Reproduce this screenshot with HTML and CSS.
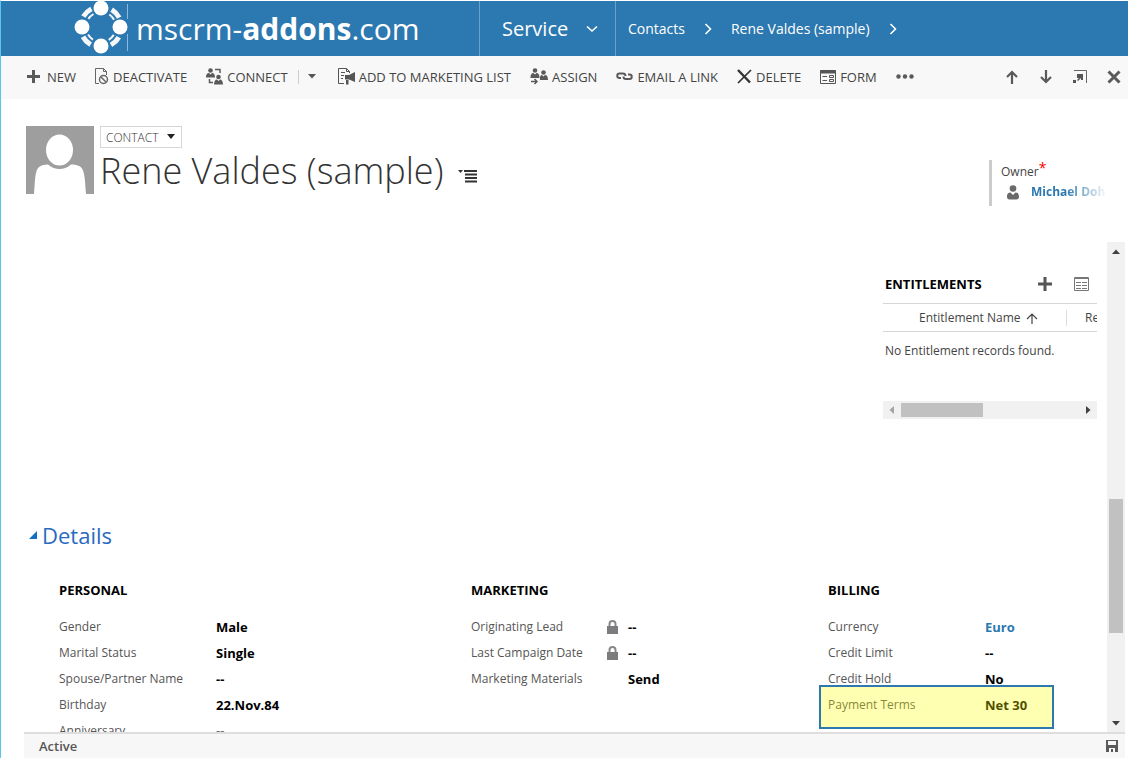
FILE: index.html
```html
<!DOCTYPE html>
<html lang="en">
<head>
    <meta charset="UTF-8">
    <meta name="viewport" content="width=device-width, initial-scale=1.0">
    <title>Contact: Rene Valdes (sample)</title>
    <link rel="stylesheet" href="styles.css">
</head>
<body>
    <header class="topbar">
        <a href="#" class="brand">
            <svg class="brand-logo" width="56" height="55" viewBox="0 0 56 55">
                <g fill="none" stroke="#f4f6f8">
                    <circle cx="27" cy="26" r="20.500" stroke-width="5" stroke-dasharray="11 21.201" stroke-dashoffset="-10.600"/>
                    <circle cx="27" cy="26" r="15" stroke-width="2" stroke-dasharray="7 16.562" stroke-dashoffset="-8.300"/>
                </g>
                <g fill="#fff">
                    <circle cx="27" cy="7" r="7.500"/>
                    <circle cx="8" cy="26" r="7.500"/>
                    <circle cx="46" cy="26" r="7.500"/>
                    <circle cx="27" cy="45" r="7.500"/>
                </g>
                <path d="M53.500 3v15M53.500 33v17" stroke="#8db9da"/>
            </svg>
            <span class="brand-name">mscrm-<b>addons</b>.com</span>
        </a>
        <button class="area">Service
            <svg width="12" height="8" viewBox="0 0 12 8"><path d="M1 1.500l5 4.500 5-4.500" fill="none" stroke="#fff" stroke-width="1.600"/></svg>
        </button>
        <nav class="crumbs">
            <a href="#">Contacts</a>
            <svg width="8" height="12" viewBox="0 0 8 12"><path d="M1.500 1l5 5-5 5" fill="none" stroke="#fff" stroke-width="1.600"/></svg>
            <a href="#">Rene Valdes (sample)</a>
            <svg width="8" height="12" viewBox="0 0 8 12"><path d="M1.500 1l5 5-5 5" fill="none" stroke="#fff" stroke-width="1.600"/></svg>
        </nav>
    </header>

    <div class="commands">
        <button class="cmd cmd-new">
            <svg width="15" height="15" viewBox="0 0 15 15"><path d="M7.500 1v13M1 7.500h13" stroke="#5a5a5a" stroke-width="3"/></svg>
            NEW
        </button>
        <button class="cmd">
            <svg width="14" height="17" viewBox="0 0 14 17" fill="none" stroke="#666">
                <path d="M4 15.500H.5V.5h8l3 3V7M8.500.5v3h3"/>
                <circle cx="8.500" cy="11.500" r="4" stroke-width="1.500"/>
                <path d="M6 9l5 5" stroke-width="1.500"/>
            </svg>
            DEACTIVATE
        </button>
        <button class="cmd">
            <svg width="17" height="17" viewBox="0 0 17 17" fill="#5a5a5a">
                <circle cx="4.500" cy="2.500" r="2.300"/>
                <path d="M0 9.500C0 6 1.500 5 3 5l1.500 1.500L6 5c1.500 0 3 1 3 4.500z"/>
                <circle cx="12.500" cy="9" r="2.300"/>
                <path d="M8 16.500c0-3.500 1.500-5 3-5l1.500 1.500 1.500-1.500c1.500 0 3 1.500 3 5z"/>
                <path d="M9 1.500h5V5M3.500 11v3.500H7" fill="none" stroke="#5a5a5a" stroke-width="1.500"/>
            </svg>
            CONNECT
        </button>
        <button class="cmd-split" aria-label="More connect options">
            <svg width="8" height="5" viewBox="0 0 8 5"><path d="M0 0h8L4 4.500z" fill="#555"/></svg>
        </button>
        <button class="cmd">
            <svg width="17" height="17" viewBox="0 0 17 17">
                <path d="M6 15.500H.5V.5h8l3 3V5M8.500.5v3h3M3 4.500h4M3 7.500h3M3 10.500h2" fill="none" stroke="#555"/>
                <path d="M17 4v10l-6-2.500H7V7h4zM8 12h2.500v4.500H8z" fill="#555"/>
            </svg>
            ADD TO MARKETING LIST
        </button>
        <button class="cmd">
            <svg width="18" height="17" viewBox="0 0 18 17" fill="#5a5a5a">
                <circle cx="5" cy="2.500" r="2.300"/>
                <path d="M.5 10c0-4 1.500-5 3-5L5 6.500 6.500 5c1.500 0 3 1 3 5z"/>
                <circle cx="13.500" cy="4.500" r="2.300"/>
                <path d="M10 12c-.5-3.500.5-5 2-5l1.500 1.500L15 7c1.500 0 3 1 3 5z"/>
                <path d="M1 13.500h5.500M4.500 11l2.500 2.500L4.500 16" fill="none" stroke="#5a5a5a" stroke-width="1.500"/>
            </svg>
            ASSIGN
        </button>
        <button class="cmd">
            <svg width="17" height="9" viewBox="0 0 17 9" fill="none" stroke="#5a5a5a" stroke-width="2">
                <path d="M5 6H3.500a2.200 2.200 0 010-4.500H7c1.500 0 2.500 1 2.500 2.500"/>
                <path d="M12 2.500h1.500a2.200 2.200 0 010 4.500H10C8.500 7 7.500 6 7.500 4.500"/>
            </svg>
            EMAIL A LINK
        </button>
        <button class="cmd">
            <svg width="15" height="15" viewBox="0 0 15 15" fill="none" stroke="#333"><path d="M1 1l12 12.500" stroke-width="2.500"/><path d="M14 1L1 14" stroke-width="1.700"/></svg>
            DELETE
        </button>
        <button class="cmd">
            <svg width="16" height="14" viewBox="0 0 16 14" fill="none" stroke="#555">
                <path d="M.5.5h15v13H.5z"/><path d="M0 2h16" stroke-width="3"/>
                <path d="M2.500 6.500H7M2.500 10.500H7M9.500 5.500h4v2h-4zM9.500 9.500h4v2h-4z"/>
            </svg>
            FORM
        </button>
        <button class="cmd" aria-label="More commands">
            <svg width="18" height="5" viewBox="0 0 18 5" fill="#5a5a5a"><circle cx="2.500" cy="2.500" r="2.200"/><circle cx="9" cy="2.500" r="2.200"/><circle cx="15.500" cy="2.500" r="2.200"/></svg>
        </button>
        <div class="record-nav">
            <button aria-label="Previous record"><svg width="14" height="14" viewBox="0 0 14 14" fill="none" stroke="#5a5a5a" stroke-width="2.200"><path d="M7 14V2M2 7l5-5 5 5"/></svg></button>
            <button aria-label="Next record"><svg width="14" height="14" viewBox="0 0 14 14" fill="none" stroke="#5a5a5a" stroke-width="2.200"><path d="M7 0v12M2 7l5 5 5-5"/></svg></button>
            <button aria-label="Open in new window"><svg width="14" height="14" viewBox="0 0 14 14"><path d="M1 .5h12.500V13" fill="none" stroke="#666"/><path d="M4 4h6v6H8V8l-3 3-1-1 2-2H4zM0 10h3v3H0z" fill="#555"/></svg></button>
            <button aria-label="Close"><svg width="14" height="14" viewBox="0 0 14 14"><path d="M1.500 1.500l11 11M12.500 1.500l-11 11" stroke="#5a5a5a" stroke-width="3"/></svg></button>
        </div>
    </div>

    <main class="record">
        <div class="record-head">
            <svg class="avatar" width="68" height="68" viewBox="0 0 68 68">
                <path d="M0 0h68v68H0z" fill="#9e9e9e"/>
                <ellipse cx="33.500" cy="24" rx="13.500" ry="15.500" fill="#fff"/>
                <path d="M8 68c1-13 1-22 4-26 2-2.500 6-3.500 10-3.500 7 6 16 6 23 0 5 0 9 1 11 4 3 5 3 13 4 25.500z" fill="#fff"/>
            </svg>
            <div class="record-title">
                <div class="entity">
                    <select class="entity-select" aria-label="Form"><option>CONTACT</option></select>
                </div>
                <div class="name-row">
                    <h1>Rene Valdes (sample)</h1>
                    <button class="plain" aria-label="Form sections">
                        <svg width="20" height="14" viewBox="0 0 20 14"><path d="M0 1h5L2.500 4z" fill="#333"/><path d="M6 2h13M7 5.500h12M7 9h12M7 12.500h12" stroke="#333" stroke-width="2"/></svg>
                    </button>
                </div>
            </div>
            <div class="owner">
                <div class="owner-label">Owner<span class="required">*</span></div>
                <div class="owner-value">
                    <svg width="12" height="15" viewBox="0 0 12 15" fill="#6a6a6a"><circle cx="6" cy="3.500" r="3.300"/><path d="M0 12c0-3.500 1.500-4.500 3.500-4.500L6 10l2.500-2.500c2 0 3.500 1 3.500 4.500 0 1.500-1 2.500-2.500 2.500h-7C1 14.500 0 13.500 0 12z"/></svg>
                    <a href="#">Michael Doh</a>
                </div>
            </div>
        </div>

        <div class="scroll-area">
            <div class="form-body">
                <section class="entitlements">
                    <div class="grid-head">
                        <h3>ENTITLEMENTS</h3>
                        <button class="plain" aria-label="Add entitlement"><svg width="14" height="14" viewBox="0 0 14 14"><path d="M7 0v14M0 7h14" stroke="#555" stroke-width="3"/></svg></button>
                        <button class="plain" aria-label="Open view"><svg width="15" height="14" viewBox="0 0 15 14" fill="none" stroke="#777"><path d="M.5.5h14v13H.5zM0 1.500h15M2 5.500h5M8 5.500h5M2 8.500h5M8 8.500h5M2 11.500h5M8 11.500h5"/></svg></button>
                    </div>
                    <div class="grid-view">
                        <table>
                            <thead>
                                <tr>
                                    <th class="col-name">Entitlement Name <svg width="12" height="11" viewBox="0 0 12 11"><path d="M6 11V1M1 6l5-5 5 5" fill="none" stroke="#444" stroke-width="1.200"/></svg></th>
                                    <th class="col-rest">Re</th>
                                </tr>
                            </thead>
                            <tbody>
                                <tr><td colspan="2">No Entitlement records found.</td></tr>
                            </tbody>
                        </table>
                    </div>
                    <div class="hscroll">
                        <svg width="18" height="18" viewBox="0 0 18 18"><path d="M11 5v8L6.500 9z" fill="#a3a3a3"/></svg>
                        <div class="hscroll-track"><div class="hscroll-thumb"></div></div>
                        <svg width="18" height="18" viewBox="0 0 18 18"><path d="M7 5v8l4.500-4z" fill="#404040"/></svg>
                    </div>
                </section>

                <h2><svg width="8" height="8" viewBox="0 0 8 8"><path d="M8 0v8H0z" fill="#1070c8"/></svg>Details</h2>

                <div class="columns">
                    <section>
                        <h3>PERSONAL</h3>
                        <dl>
                            <div class="field"><dt>Gender</dt><dd>Male</dd></div>
                            <div class="field"><dt>Marital Status</dt><dd>Single</dd></div>
                            <div class="field"><dt>Spouse/Partner Name</dt><dd>--</dd></div>
                            <div class="field"><dt>Birthday</dt><dd>22.Nov.84</dd></div>
                            <div class="field"><dt>Anniversary</dt><dd>--</dd></div>
                        </dl>
                    </section>
                    <section>
                        <h3>MARKETING</h3>
                        <dl>
                            <div class="field"><dt>Originating Lead <svg class="lock" width="11" height="14" viewBox="0 0 11 14"><path d="M2.500 7V4a3 3 0 016 0v3" fill="none" stroke="#888" stroke-width="2"/><path d="M0 6h11v8H0z" fill="#7c7c7f"/></svg></dt><dd>--</dd></div>
                            <div class="field"><dt>Last Campaign Date <svg class="lock" width="11" height="14" viewBox="0 0 11 14"><path d="M2.500 7V4a3 3 0 016 0v3" fill="none" stroke="#888" stroke-width="2"/><path d="M0 6h11v8H0z" fill="#7c7c7f"/></svg></dt><dd>--</dd></div>
                            <div class="field"><dt>Marketing Materials</dt><dd>Send</dd></div>
                        </dl>
                    </section>
                    <section>
                        <h3>BILLING</h3>
                        <dl>
                            <div class="field"><dt>Currency</dt><dd><a href="#">Euro</a></dd></div>
                            <div class="field"><dt>Credit Limit</dt><dd>--</dd></div>
                            <div class="field"><dt>Credit Hold</dt><dd>No</dd></div>
                            <div class="field marked"><dt>Payment Terms</dt><dd>Net 30</dd></div>
                        </dl>
                    </section>
                </div>
            </div>
            <div class="vscroll">
                <svg width="18" height="18" viewBox="0 0 18 18"><path d="M5 12h8L9 7.500z" fill="#404040"/></svg>
                <div class="vscroll-track"><div class="vscroll-thumb"></div></div>
                <svg width="18" height="18" viewBox="0 0 18 18"><path d="M5 7h8l-4 4.500z" fill="#404040"/></svg>
            </div>
        </div>
    </main>

    <footer class="statusbar">
        <span>Active</span>
        <button class="plain" aria-label="Save"><svg width="12" height="12" viewBox="0 0 12 12"><path d="M0 0h12v12H0z" fill="#5a5a5a"/><path d="M2 1h8v4H2zM3 8h6v4H7V9H5v3H3z" fill="#f7f7f7"/></svg></button>
    </footer>
</body>
</html>
```
FILE: styles.css
```css
*{
    box-sizing: border-box;
}
body{
    margin: 0;
    height: 100vh;
    display: flex;
    flex-direction: column;
    overflow: hidden;
    border-top: 1px solid #fff;
    border-left: 1px solid #5bc5ea;
    font-family: "Open Sans", "Noto Sans", sans-serif;
    font-size: 12px;
    line-height: 16px;
    color: #444;
    background-color: #fff;
}
h1, h2, h3, dl, dd{
    margin: 0;
}
a{
    color: #2c78b0;
    text-decoration: none;
}
button{
    display: flex;
    align-items: center;
    border: 0;
    padding: 0;
    background: none;
    font: inherit;
    color: inherit;
}
svg{
    flex: none;
}

/* top bar */
.topbar{
    display: flex;
    flex: none;
    height: 55px;
    background-color: #2c78b0;
    color: #fff;
}
.topbar a{
    color: #fff;
}
.brand{
    display: flex;
    align-items: center;
    width: 478px;
    padding-left: 73px;
}
.brand-name{
    padding-left: 6px;
    font-size: 30px;
    line-height: 40px;
}
.area{
    justify-content: space-between;
    width: 137px;
    padding: 0 17px 0 22px;
    border-left: 1px solid #6ba3cb;
    border-right: 1px solid #6ba3cb;
    font-size: 20px;
}
.crumbs{
    display: flex;
    align-items: center;
    gap: 19px;
    padding-left: 12px;
    font-size: 14px;
}

/* command bar */
.commands{
    display: flex;
    flex: none;
    align-items: center;
    gap: 19px;
    height: 43px;
    padding: 0 7px 2px 25px;
    background-color: #f8f8f8;
    font-size: 13px;
}
.cmd{
    gap: 4px;
    white-space: nowrap;
}
.cmd-new{
    gap: 6px;
}
.cmd-split{
    height: 14px;
    margin: 0 3px 0 -9px;
    padding-left: 9px;
    border-left: 1px solid #ccc;
}
.record-nav{
    display: flex;
    gap: 20px;
    margin-left: auto;
}

/* record header */
.record{
    display: flex;
    flex-direction: column;
    flex: 1;
    min-height: 0;
}
.record-head{
    display: flex;
    flex: none;
    height: 143px;
    padding: 27px 20px 0 25px;
}
.record-title{
    padding-left: 6px;
}
.entity{
    position: relative;
    width: 82px;
    height: 22px;
}
.entity::after{
    content: "";
    position: absolute;
    top: 8px;
    right: 7px;
    border: 4px solid transparent;
    border-top: 5px solid #222;
    border-bottom: 0;
    pointer-events: none;
}
.entity-select{
    appearance: none;
    width: 82px;
    height: 22px;
    padding: 0 5px;
    border: 1px solid #d6d6d6;
    border-radius: 0;
    background: #fff;
    font-family: inherit;
    font-size: 12px;
    font-weight: 300;
    color: #333;
}
.name-row{
    display: flex;
    align-items: center;
    gap: 15px;
}
.name-row .plain{
    padding-top: 9px;
}
h1{
    font-size: 36px;
    line-height: 46px;
    font-weight: 300;
    color: #333;
    white-space: nowrap;
}
.owner{
    width: 119px;
    height: 46px;
    margin: 34px 0 0 auto;
    padding: 4px 0 0 9px;
    border-left: 3px solid #ccc;
}
.owner-label{
    display: flex;
    line-height: 16px;
}
.required{
    margin-top: -4px;
    font-size: 14px;
    color: #f00;
}
.owner-value{
    display: flex;
    align-items: center;
    gap: 12px;
    padding: 4px 0 0 6px;
    font-weight: 700;
    white-space: nowrap;
    overflow: hidden;
    -webkit-mask-image: linear-gradient(to right, #000 60%, transparent);
    mask-image: linear-gradient(to right, #000 60%, transparent);
}

/* scrolling form */
.scroll-area{
    display: flex;
    flex: 1;
    min-height: 0;
    padding-right: 3px;
}
.form-body{
    flex: 1;
    min-width: 0;
    margin-right: 10px;
    padding: 32px 0 0 25px;
    overflow: hidden;
}
h3{
    font-size: 13px;
    line-height: 20px;
    font-weight: 700;
    color: #000;
}
.entitlements{
    width: 214px;
    margin-left: auto;
}
.grid-head{
    display: flex;
    align-items: center;
    gap: 22px;
    height: 29px;
    padding: 0 8px 9px 2px;
}
.grid-head h3{
    margin-right: auto;
}
.grid-view{
    height: 98px;
    overflow: hidden;
}
table{
    width: 300px;
    border-collapse: collapse;
    table-layout: fixed;
}
th{
    height: 28px;
    padding: 0;
    border-top: 1px solid #d6d6d6;
    border-bottom: 1px solid #d6d6d6;
    font-weight: 400;
    text-align: left;
}
th svg{
    margin-left: 2px;
    vertical-align: middle;
}
.col-name{
    width: 184px;
    padding-left: 36px;
    background: linear-gradient(#ddd, #ddd) right center / 1px 16px no-repeat;
}
.col-rest{
    padding-left: 18px;
}
td{
    padding: 11px 2px;
}
.hscroll{
    display: flex;
    height: 18px;
    background-color: #f1f1f1;
}
.hscroll-track{
    flex: 1;
    padding: 2px 0;
}
.hscroll-thumb{
    width: 46%;
    height: 14px;
    background-color: #c1c1c1;
}
h2{
    display: flex;
    align-items: center;
    gap: 5px;
    margin-top: 100px;
    padding-left: 3px;
    font-size: 22px;
    line-height: 32px;
    font-weight: 400;
    color: #2a6ac0;
}
.columns{
    display: grid;
    grid-template-columns: 412fr 357fr 269fr;
    margin-top: 29px;
    padding-left: 33px;
}
dl{
    padding-top: 14px;
}
.field{
    position: relative;
    display: flex;
    height: 26px;
    line-height: 26px;
}
dt{
    display: flex;
    align-items: center;
    width: 147px;
    margin-right: 10px;
    padding-right: 20px;
    white-space: nowrap;
    color: #555;
}
dt:has(.lock){
    padding-right: 0;
}
.lock{
    margin-left: auto;
}
dd{
    font-size: 13px;
    line-height: 26px;
    font-weight: 700;
    color: #000;
}
.marked::after{
    content: "";
    position: absolute;
    top: -7px;
    left: -9px;
    width: 231px;
    height: 40px;
    border: 2px solid #2c78b0;
    background-color: rgba(255, 255, 0, 0.3);
}
.vscroll{
    display: flex;
    flex-direction: column;
    width: 18px;
    background-color: #f1f1f1;
}
.vscroll-track{
    display: flex;
    flex-direction: column;
    flex: 1;
    padding: 0 2px;
}
.vscroll-thumb{
    height: 134px;
    margin-top: auto;
    margin-bottom: 81px;
    background-color: #c1c1c1;
}

/* status bar */
.statusbar{
    display: flex;
    flex: none;
    align-items: center;
    justify-content: space-between;
    height: 26px;
    margin: 0 3px 0 23px;
    padding: 0 7px 0 15px;
    border-top: 2px solid #dedede;
    background-color: #f7f7f7;
    font-size: 13px;
    font-weight: 600;
    color: #555;
}
```
